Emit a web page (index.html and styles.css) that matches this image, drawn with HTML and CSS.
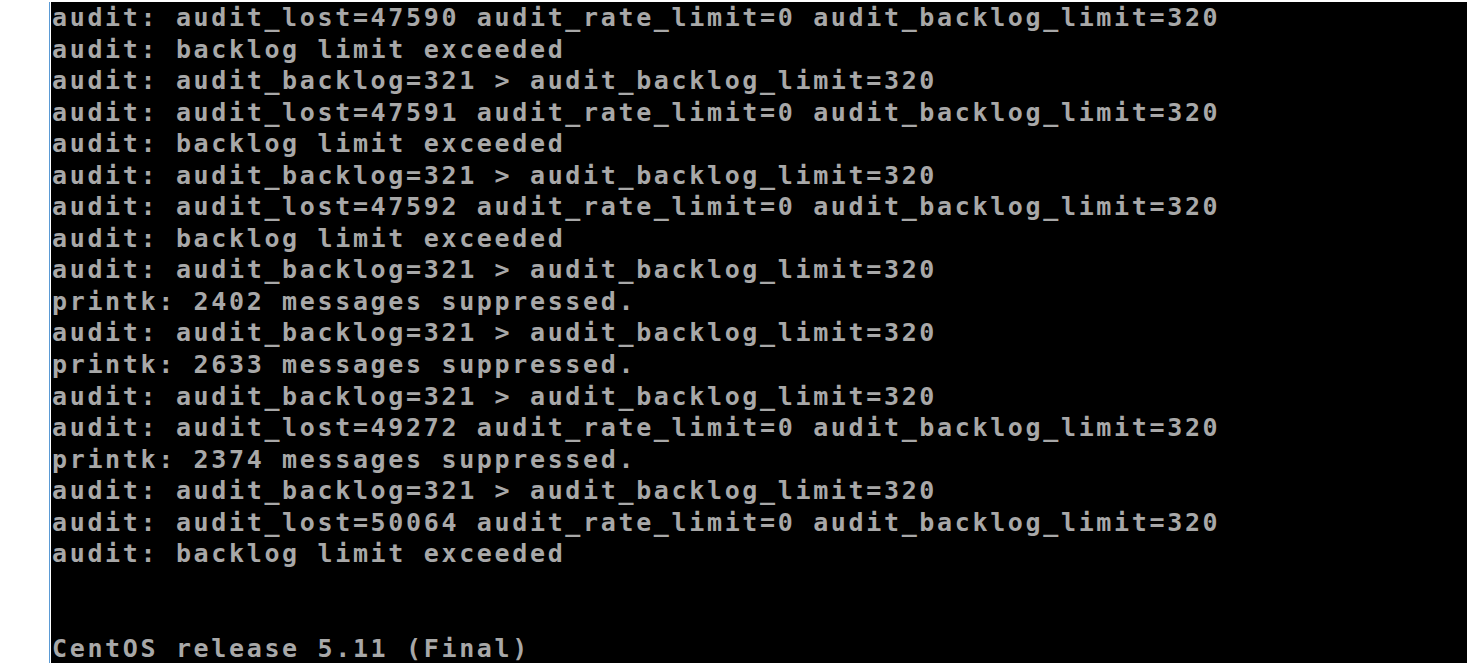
FILE: index.html
```
<!DOCTYPE html>
<html lang="en">
<head>
    <meta charset="UTF-8">
    <meta name="viewport" content="width=device-width, initial-scale=1.0">
    <title>Console</title>
    <link rel="stylesheet" href="styles.css">
</head>
<body>
    <div class="frame">
        <div class="console">
<pre class="screen">audit: audit_lost=47590 audit_rate_limit=0 audit_backlog_limit=320
audit: backlog limit exceeded
audit: audit_backlog=321 &gt; audit_backlog_limit=320
audit: audit_lost=47591 audit_rate_limit=0 audit_backlog_limit=320
audit: backlog limit exceeded
audit: audit_backlog=321 &gt; audit_backlog_limit=320
audit: audit_lost=47592 audit_rate_limit=0 audit_backlog_limit=320
audit: backlog limit exceeded
audit: audit_backlog=321 &gt; audit_backlog_limit=320
printk: 2402 messages suppressed.
audit: audit_backlog=321 &gt; audit_backlog_limit=320
printk: 2633 messages suppressed.
audit: audit_backlog=321 &gt; audit_backlog_limit=320
audit: audit_lost=49272 audit_rate_limit=0 audit_backlog_limit=320
printk: 2374 messages suppressed.
audit: audit_backlog=321 &gt; audit_backlog_limit=320
audit: audit_lost=50064 audit_rate_limit=0 audit_backlog_limit=320
audit: backlog limit exceeded


CentOS release 5.11 (Final)</pre>
        </div>
    </div>
</body>
</html>
```
FILE: styles.css
```
html, body {
    height: 100%;
}
body {
    margin: 0;
    background-color: #fff;
    overflow: hidden;
}
.frame {
    height: 100%;
    margin-left: 49px;
    padding-left: 1px;
    border-left: 1px solid #5b9bd5;
}
.console {
    height: 100%;
    margin-top: 2px;
    background-color: #000;
}
.screen {
    margin: 0;
    padding: 0 0 0 1px;
    font-family: "DejaVu Sans Mono", monospace;
    font-weight: bold;
    font-size: 25px;
    letter-spacing: 2.65px;
    line-height: 31.55px;
    color: #a8a8a8;
    white-space: pre;
}
```
